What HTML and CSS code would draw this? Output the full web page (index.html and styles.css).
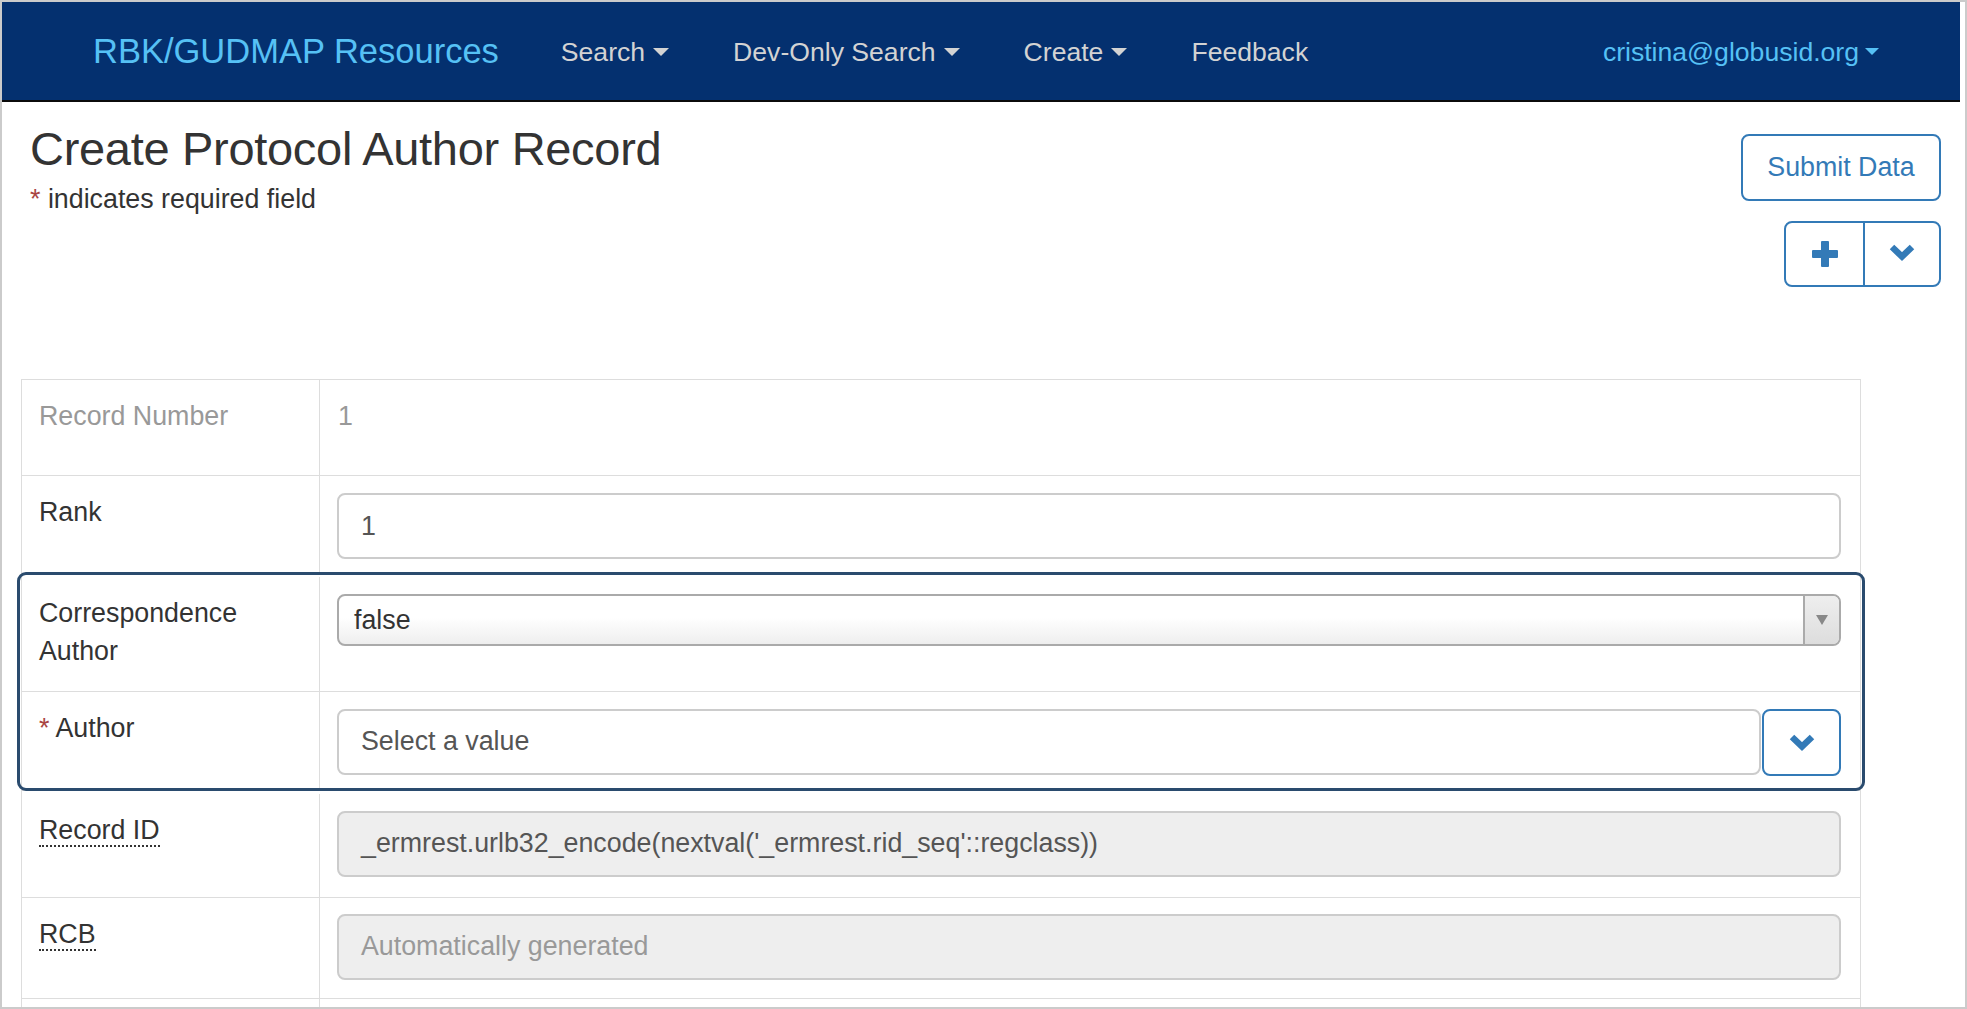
FILE: index.html
```html
<!DOCTYPE html>
<html lang="en">
<head>
<meta charset="utf-8">
<title>Create Protocol Author Record</title>
<link rel="stylesheet" href="styles.css">
</head>
<body>
<div class="frame">
  <nav class="navbar">
    <a class="brand">RBK/GUDMAP Resources</a>
    <ul class="nav">
      <li class="nav-item">Search<span class="caret"></span></li>
      <li class="nav-item">Dev-Only Search<span class="caret"></span></li>
      <li class="nav-item">Create<span class="caret"></span></li>
      <li class="nav-item">Feedback</li>
    </ul>
    <div class="user">cristina@globusid.org<span class="caret caret-sm"></span></div>
  </nav>

  <main class="content">
    <header class="page-head">
      <div class="titles">
        <h1 class="title">Create Protocol Author Record</h1>
        <p class="required-note"><span class="req">*</span> indicates required field</p>
      </div>
      <div class="actions">
        <button class="btn btn-submit">Submit Data</button>
        <div class="btn-group">
          <span class="btn-cell">
            <svg width="26" height="26" viewBox="0 0 26 26"><rect x="0" y="9" width="26" height="8" rx="1" fill="#337ab7"/><rect x="9" y="0" width="8" height="26" rx="1" fill="#337ab7"/></svg>
          </span>
          <span class="btn-cell btn-cell-right">
            <svg width="26" height="18" viewBox="0 0 26 18"><polyline points="3,4 13,13.5 23,4" fill="none" stroke="#337ab7" stroke-width="6.5" stroke-linejoin="miter"/></svg>
          </span>
        </div>
      </div>
    </header>

    <section class="form-table">
      <div class="row">
        <div class="cell label muted">Record Number</div>
        <div class="cell value muted">1</div>
      </div>
      <div class="row">
        <div class="cell label">Rank</div>
        <div class="cell value"><div class="control">1</div></div>
      </div>
      <div class="group">
        <div class="row">
          <div class="cell label tall">Correspondence Author</div>
          <div class="cell value">
            <div class="select">
              <span class="select-text">false</span>
              <span class="select-arrow"><span class="tri"></span></span>
            </div>
          </div>
        </div>
        <div class="row">
          <div class="cell label"><span class="req">*</span> Author</div>
          <div class="cell value">
            <div class="input-group">
              <div class="control control-flex">Select a value</div>
              <span class="btn-chevron">
                <svg width="26" height="18" viewBox="0 0 26 18"><polyline points="3,4 13,13.5 23,4" fill="none" stroke="#337ab7" stroke-width="6.5" stroke-linejoin="miter"/></svg>
              </span>
            </div>
          </div>
        </div>
      </div>
      <div class="row row-rid">
        <div class="cell label"><span class="dotted">Record ID</span></div>
        <div class="cell value"><div class="control disabled">_ermrest.urlb32_encode(nextval('_ermrest.rid_seq'::regclass))</div></div>
      </div>
      <div class="row row-rcb">
        <div class="cell label"><span class="dotted">RCB</span></div>
        <div class="cell value"><div class="control disabled placeholder">Automatically generated</div></div>
      </div>
      <div class="row">
        <div class="cell label"></div>
        <div class="cell value"></div>
      </div>
    </section>
  </main>
</div>
</body>
</html>
```

FILE: styles.css
```css
* { box-sizing: border-box; }

html, body {
  margin: 0;
  padding: 0;
  background: #fff;
}

body {
  font-family: "Liberation Sans", Arial, sans-serif;
  font-size: 26.8px;
  line-height: 38.3px;
  color: #333;
}

.frame {
  width: 1967px;
  height: 1009px;
  border: 2px solid #cbcbcb;
  overflow: hidden;
  background: #fff;
}

/* ---------- navbar ---------- */
.navbar {
  display: flex;
  align-items: center;
  height: 100px;
  margin-right: 5px;
  background: #04306f;
  border-bottom: 2px solid #0b0b0b;
  padding-left: 91px;
  padding-right: 81px;
}

.brand {
  font-size: 34.5px;
  line-height: 40px;
  color: #56c1f5;
  padding-right: 30px;
  padding-bottom: 1px;
}

.nav {
  display: flex;
  list-style: none;
  margin: 0;
  padding: 0;
}

.nav-item {
  font-size: 26.6px;
  line-height: 31px;
  color: #d3d3d3;
  padding: 3px 32px 0;
  white-space: nowrap;
}

.caret {
  display: inline-block;
  width: 0;
  height: 0;
  border-top: 8px solid;
  border-left: 8px solid transparent;
  border-right: 8px solid transparent;
  margin-left: 8px;
  vertical-align: middle;
  position: relative;
  top: -2px;
}

.caret-sm {
  border-top-width: 7px;
  border-left-width: 7px;
  border-right-width: 7px;
  margin-left: 6px;
}

.user {
  margin-left: auto;
  font-size: 26.6px;
  line-height: 31px;
  padding-top: 3px;
  color: #56c1f5;
  white-space: nowrap;
}

/* ---------- header ---------- */
.page-head {
  display: flex;
  justify-content: space-between;
  align-items: flex-start;
  padding: 21px 24px 0 28px;
}

.title {
  margin: 0;
  font-size: 47px;
  line-height: 52px;
  font-weight: normal;
  letter-spacing: -0.3px;
  color: #333;
}

.required-note {
  margin: 5px 0 0;
  font-size: 26.8px;
  line-height: 38.3px;
}

.req {
  color: #a94442;
}

.actions {
  display: flex;
  flex-direction: column;
  align-items: flex-end;
  gap: 20px;
  margin-top: 11px;
}

.btn {
  font-family: inherit;
  background: #fff;
  cursor: pointer;
}

.btn-submit {
  height: 67px;
  width: 200px;
  padding: 0;
  border: 2px solid #337ab7;
  border-radius: 8px;
  color: #337ab7;
  font-size: 26.8px;
}

.btn-group {
  display: flex;
  height: 66px;
  width: 157px;
  border: 2px solid #337ab7;
  border-radius: 8px;
}

.btn-cell {
  flex: 0 0 77px;
  display: flex;
  align-items: center;
  justify-content: center;
}

.btn-cell-right {
  flex: 1;
  border-left: 2px solid #337ab7;
  padding-bottom: 4px;
}

/* ---------- form table ---------- */
.form-table {
  margin: 92px 0 0 19px;
  width: 1840px;
  border: 1px solid #dddddd;
  border-bottom: none;
}

.row {
  display: grid;
  grid-template-columns: 298px 1fr;
  min-height: 96px;
  border-bottom: 1px solid #dddddd;
}

.cell {
  padding: 17px 17px 14px;
}

.label {
  border-right: 1px solid #dddddd;
}

.label.tall {
  padding-bottom: 20px;
}

.value {
  padding: 17px 19px 14px 17px;
}

.muted {
  color: #999;
}

.value.muted {
  padding-left: 18px;
}

.group {
  position: relative;
  padding: 3px 0;
}

.group::after {
  content: "";
  position: absolute;
  top: -2px;
  left: -5px;
  right: -5px;
  bottom: 3px;
  border: 3px solid #2a4b6e;
  border-radius: 9px;
  pointer-events: none;
}

.control {
  height: 66px;
  border: 2px solid #cccccc;
  border-radius: 8px;
  padding: 0 22px;
  display: flex;
  align-items: center;
  color: #555;
  background: #fff;
  white-space: nowrap;
  overflow: hidden;
}

.control.disabled {
  background: #eeeeee;
  color: #555;
}

.control.placeholder {
  color: #999;
}

.select {
  height: 52px;
  display: flex;
  border: 2px solid #aaaaaa;
  border-radius: 8px;
  background: linear-gradient(#ffffff 45%, #eeeeee);
  overflow: hidden;
}

.select-text {
  flex: 1;
  padding-left: 15px;
  line-height: 48px;
  color: #333;
}

.select-arrow {
  flex: 0 0 36px;
  border-left: 2px solid #aaaaaa;
  background: linear-gradient(#eeeeee, #dddddd);
  display: flex;
  align-items: center;
  justify-content: center;
}

.tri {
  width: 0;
  height: 0;
  border-top: 10px solid #888;
  border-left: 6px solid transparent;
  border-right: 6px solid transparent;
}

.input-group {
  display: flex;
  gap: 1px;
}

.control-flex {
  flex: 1;
}

.btn-chevron {
  flex: 0 0 79px;
  height: 67px;
  border: 2px solid #337ab7;
  border-radius: 8px;
  display: flex;
  align-items: center;
  justify-content: center;
  background: #fff;
}

.dotted {
  border-bottom: 2px dotted #333;
}

.row-rid .value {
  padding-bottom: 20px;
}

.row-rcb .value {
  padding-top: 16px;
  padding-bottom: 18px;
}
```
